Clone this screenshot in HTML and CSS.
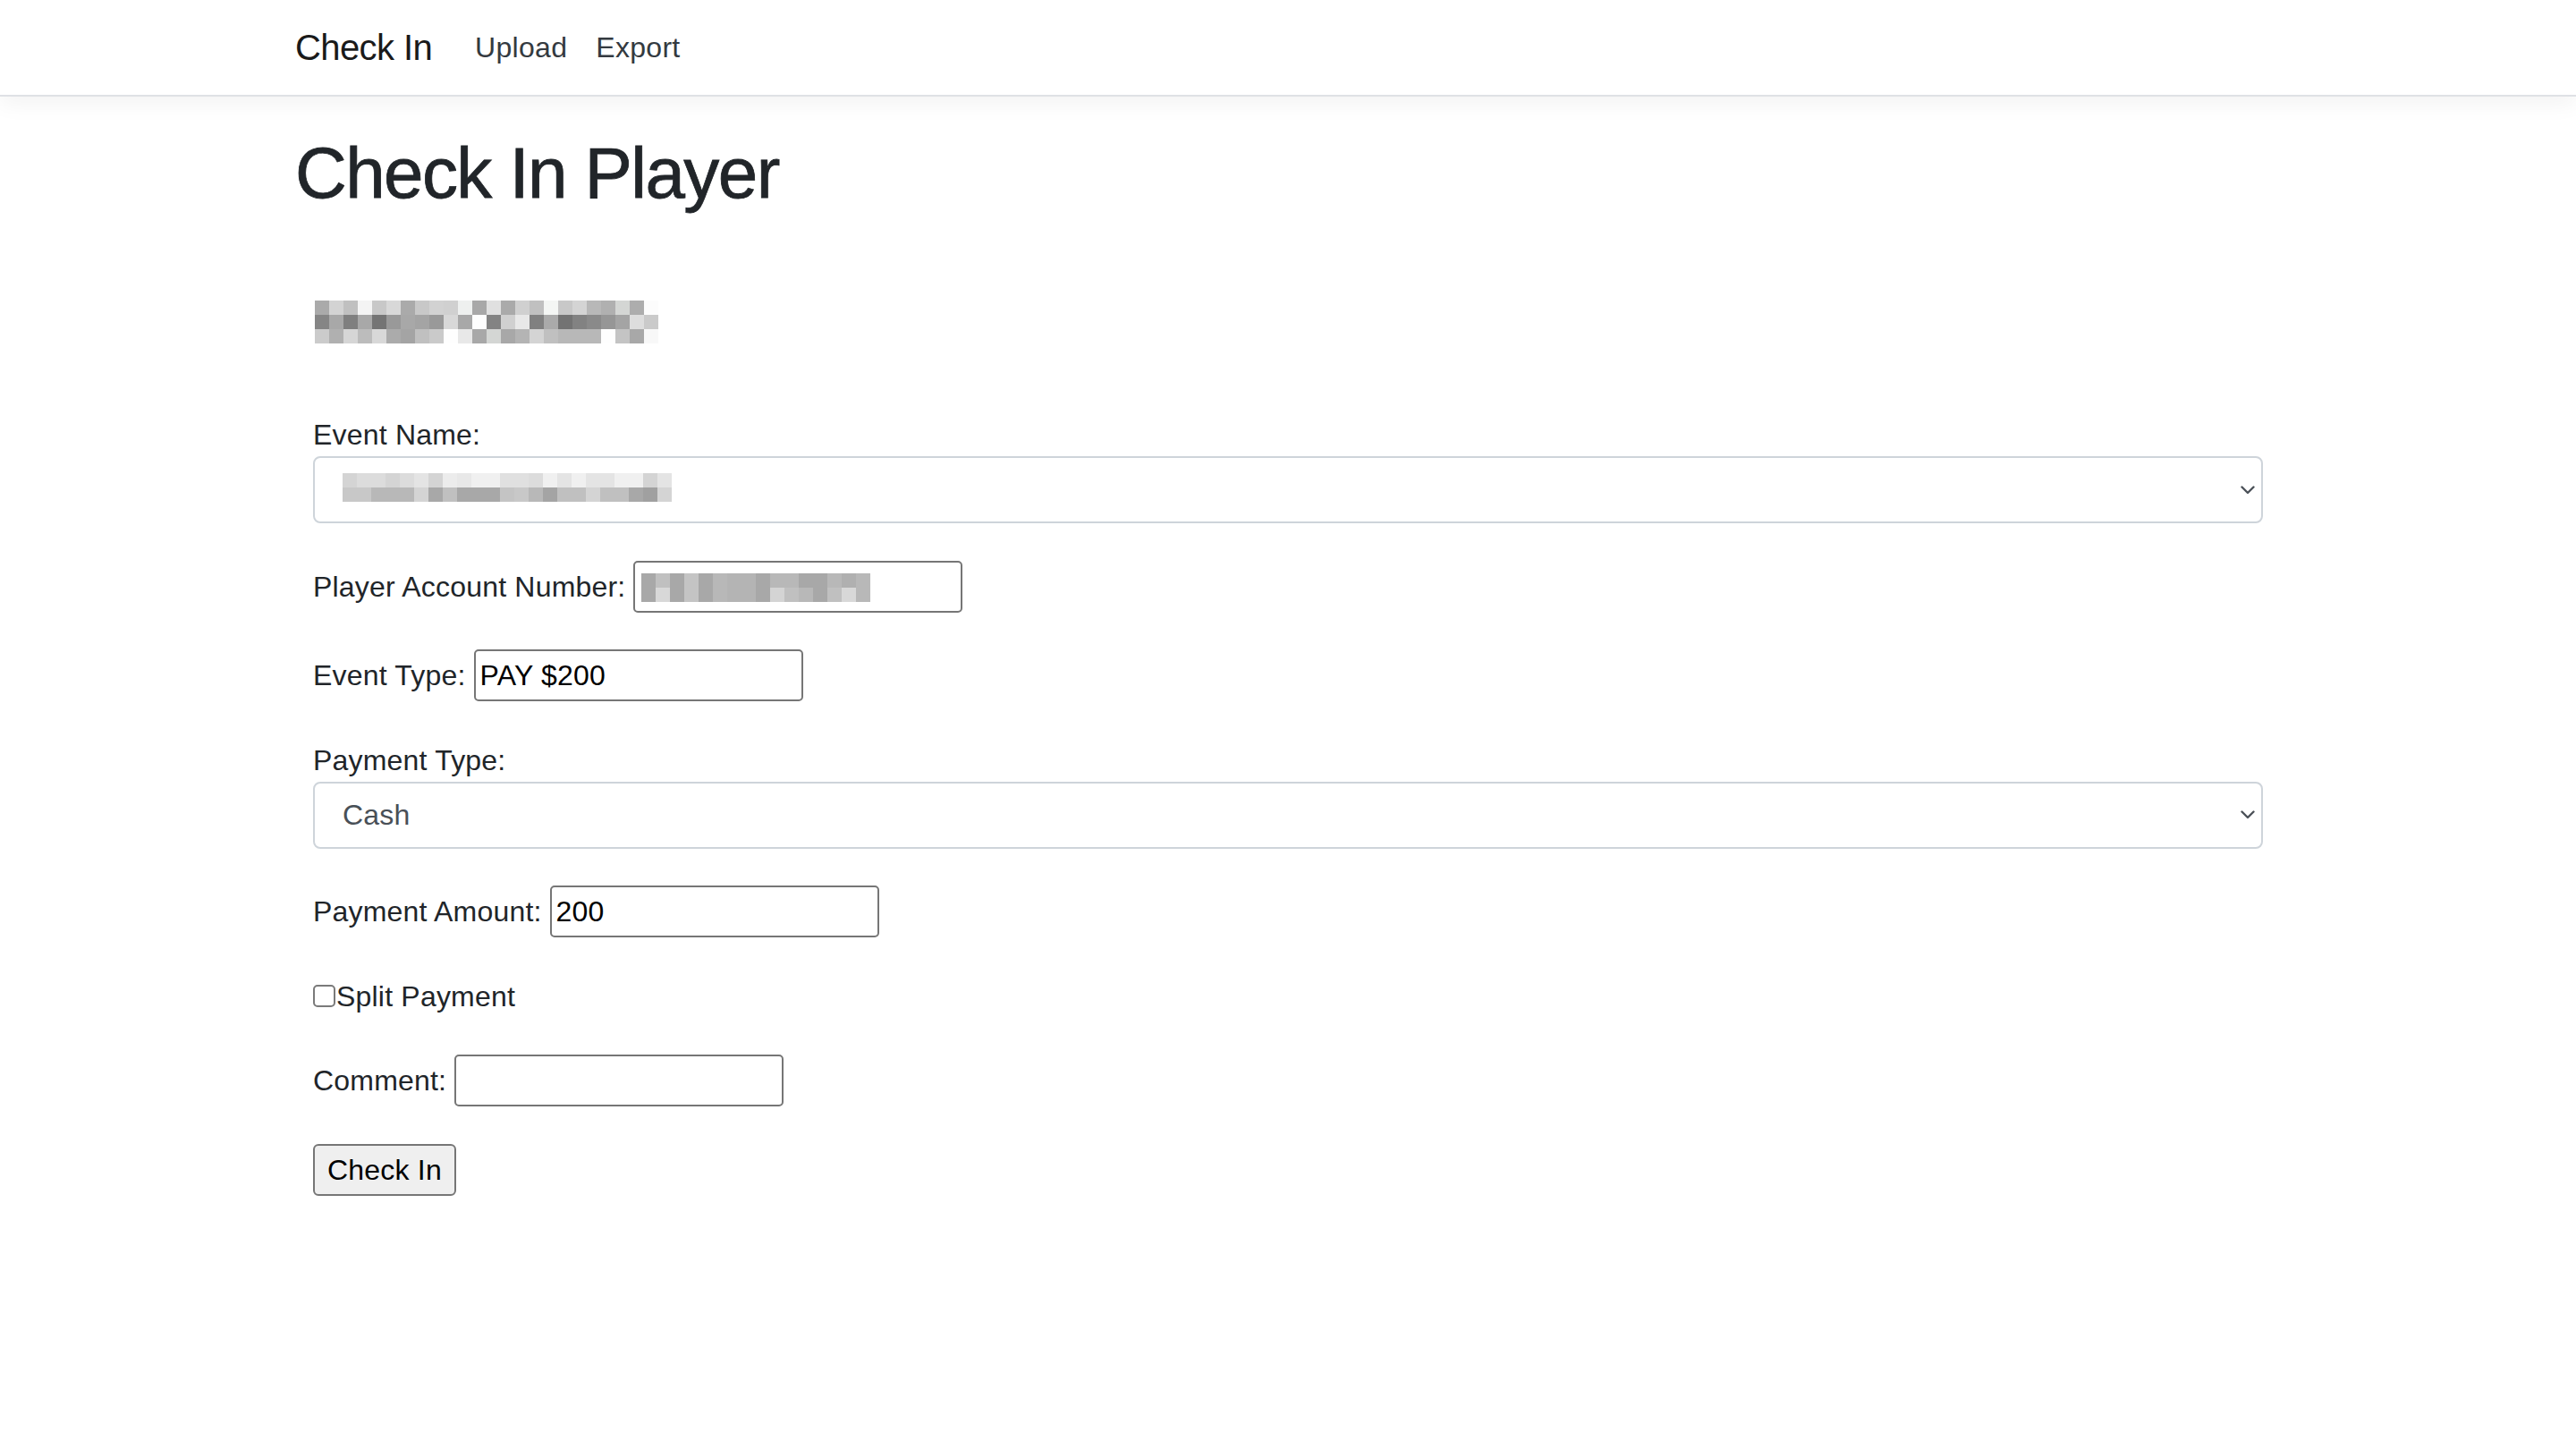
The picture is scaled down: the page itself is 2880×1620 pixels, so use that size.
FILE: index.html
```html
<!DOCTYPE html>
<html lang="en">
<head>
<meta charset="utf-8">
<title>Check In Player</title>
<link rel="stylesheet" href="styles.css">
</head>
<body>
<header class="navbar">
  <div class="container nav-inner">
    <a class="brand" href="#">Check In</a>
    <nav class="nav-links">
      <a href="#">Upload</a>
      <a href="#">Export</a>
    </nav>
  </div>
</header>

<main class="container">
  <h1 class="page-title">Check In Player</h1>
  <div class="panel">
    <div class="mosaic name-mosaic" aria-hidden="true">
      <div class="mrow">
        <i style="background:#aaaaaa"></i><i style="background:#d3d3d3"></i><i style="background:#c0c0c0"></i><i style="background:#f4f4f4"></i><i style="background:#c8c8c8"></i><i style="background:#d8d8d8"></i><i style="background:#aaaaaa"></i><i style="background:#c8c8c8"></i><i style="background:#d2d2d2"></i><i style="background:#d0d0d0"></i><i style="background:#eef0ef"></i><i style="background:#a8a8a8"></i><i style="background:#e0e0e0"></i><i style="background:#aaaaaa"></i><i style="background:#d0d0d0"></i><i style="background:#c0c0c0"></i><i style="background:#f4f6f4"></i><i style="background:#c8c8c8"></i><i style="background:#d4d4d4"></i><i style="background:#b8b8b8"></i><i style="background:#b0b0b0"></i><i style="background:#d4d6d4"></i><i style="background:#adadad"></i><i style="background:#fcfcfc"></i>
      </div>
      <div class="mrow">
        <i style="background:#858585"></i><i style="background:#a8a8a8"></i><i style="background:#7f7f7f"></i><i style="background:#a8a8a8"></i><i style="background:#747474"></i><i style="background:#999999"></i><i style="background:#a8a8a8"></i><i style="background:#a4a4a4"></i><i style="background:#999999"></i><i style="background:#d8d8d8"></i><i style="background:#a8a8a8"></i><i style="background:#fefefe"></i><i style="background:#838383"></i><i style="background:#d0d0d0"></i><i style="background:#e8e8e8"></i><i style="background:#808080"></i><i style="background:#aaaaaa"></i><i style="background:#737373"></i><i style="background:#828282"></i><i style="background:#8a8a8a"></i><i style="background:#969696"></i><i style="background:#a4a4a4"></i><i style="background:#dddddd"></i><i style="background:#cacaca"></i>
      </div>
      <div class="mrow">
        <i style="background:#cbcbcb"></i><i style="background:#b0b0b0"></i><i style="background:#d6d6d6"></i><i style="background:#bcbcbc"></i><i style="background:#d8d8d8"></i><i style="background:#ababab"></i><i style="background:#a4a4a4"></i><i style="background:#c0c0c0"></i><i style="background:#cacaca"></i><i style="background:#fefefe"></i><i style="background:#e8e8e8"></i><i style="background:#a8a8a8"></i><i style="background:#d4d6d4"></i><i style="background:#a8a8a8"></i><i style="background:#b4b4b4"></i><i style="background:#d4d4d4"></i><i style="background:#c0c0c0"></i><i style="background:#b8b8b8"></i><i style="background:#b8b8b8"></i><i style="background:#b8b8b8"></i><i style="background:#fefefe"></i><i style="background:#c4c4c4"></i><i style="background:#a8a8a8"></i><i style="background:#f8f8f8"></i>
      </div>
    </div>

    <form class="checkin-form">
      <div class="field-block">
        <label class="label">Event Name:</label>
        <div class="select-box">
          <div class="mosaic" aria-hidden="true">
            <div class="mrow">
              <i style="background:#d4d4d4"></i><i style="background:#dcdcdc"></i><i style="background:#dcdcdc"></i><i style="background:#d4d4d4"></i><i style="background:#dcdcdc"></i><i style="background:#e4e4e4"></i><i style="background:#d4d4d4"></i><i style="background:#ececec"></i><i style="background:#e8e8e8"></i><i style="background:#f0f0f0"></i><i style="background:#f0f0f0"></i><i style="background:#e0e0e0"></i><i style="background:#e0e0e0"></i><i style="background:#dcdcdc"></i><i style="background:#f0f0f0"></i><i style="background:#e4e4e4"></i><i style="background:#f0f0f0"></i><i style="background:#e4e4e4"></i><i style="background:#e4e4e4"></i><i style="background:#f0f0f0"></i><i style="background:#f0f0f0"></i><i style="background:#d4d4d4"></i><i style="background:#e4e4e4"></i>
            </div>
            <div class="mrow">
              <i style="background:#c8c8c8"></i><i style="background:#c8c8c8"></i><i style="background:#b8b8b8"></i><i style="background:#b8b8b8"></i><i style="background:#b8b8b8"></i><i style="background:#d4d4d4"></i><i style="background:#a8a8a8"></i><i style="background:#c0c0c0"></i><i style="background:#a8a8a8"></i><i style="background:#a8a8a8"></i><i style="background:#a8a8a8"></i><i style="background:#c4c4c4"></i><i style="background:#c8c8c8"></i><i style="background:#b8b8b8"></i><i style="background:#a4a4a4"></i><i style="background:#c0c0c0"></i><i style="background:#c0c0c0"></i><i style="background:#d4d4d4"></i><i style="background:#c0c0c0"></i><i style="background:#c0c0c0"></i><i style="background:#a8a8a8"></i><i style="background:#a0a0a0"></i><i style="background:#d4d4d4"></i>
            </div>
          </div>
          <svg class="chevron" viewBox="0 0 16 10" aria-hidden="true"><path d="M1.5 1.5 L8 8 L14.5 1.5" fill="none" stroke="#4b5158" stroke-width="2.4" stroke-linecap="round" stroke-linejoin="round"/></svg>
        </div>
      </div>

      <div class="field-inline">
        <label class="label">Player Account Number:</label>
        <div class="input input-mosaic">
          <div class="mosaic" aria-hidden="true">
            <div class="mrow">
              <i style="background:#a8a8a8"></i><i style="background:#c0c0c0"></i><i style="background:#a8a8a8"></i><i style="background:#c4c4c4"></i><i style="background:#a8a8a8"></i><i style="background:#b8b8b8"></i><i style="background:#b4b4b4"></i><i style="background:#b4b4b4"></i><i style="background:#a8a8a8"></i><i style="background:#b8b8b8"></i><i style="background:#b8b8b8"></i><i style="background:#a8a8a8"></i><i style="background:#a8a8a8"></i><i style="background:#b8b8b8"></i><i style="background:#b0b0b0"></i><i style="background:#b8b8b8"></i>
            </div>
            <div class="mrow">
              <i style="background:#a8a8a8"></i><i style="background:#d8d8d8"></i><i style="background:#a8a8a8"></i><i style="background:#c4c4c4"></i><i style="background:#a8a8a8"></i><i style="background:#b8b8b8"></i><i style="background:#b4b4b4"></i><i style="background:#b4b4b4"></i><i style="background:#a8a8a8"></i><i style="background:#d4d4d4"></i><i style="background:#c0c0c0"></i><i style="background:#b8b8b8"></i><i style="background:#a8a8a8"></i><i style="background:#c0c0c0"></i><i style="background:#d8d8d8"></i><i style="background:#b8b8b8"></i>
            </div>
          </div>
        </div>
      </div>

      <div class="field-inline">
        <label class="label" for="eventType">Event Type:</label>
        <input class="input" id="eventType" type="text" value="PAY $200">
      </div>

      <div class="field-block">
        <label class="label" for="paymentType">Payment Type:</label>
        <select class="select" id="paymentType">
          <option>Cash</option>
          <option>Card</option>
        </select>
      </div>

      <div class="field-inline">
        <label class="label" for="paymentAmount">Payment Amount:</label>
        <input class="input" id="paymentAmount" type="text" value="200">
      </div>

      <div class="field-check">
        <input class="checkbox" id="split" type="checkbox">
        <label class="label" for="split">Split Payment</label>
      </div>

      <div class="field-inline">
        <label class="label" for="comment">Comment:</label>
        <input class="input" id="comment" type="text" value="">
      </div>

      <div class="field-inline">
        <button class="btn" type="button">Check In</button>
      </div>
    </form>
  </div>
</main>
</body>
</html>
```

FILE: styles.css
```css
* {
  box-sizing: border-box;
}

html, body {
  margin: 0;
  padding: 0;
  background: #ffffff;
}

body {
  font-family: "Liberation Sans", Arial, sans-serif;
  font-size: 32px;
  line-height: 48px;
  color: #212529;
}

.container {
  max-width: 2280px;
  margin: 0 auto;
  padding: 0 30px;
}

/* Navbar */
.navbar {
  height: 108px;
  background: #ffffff;
  border-bottom: 2px solid #dfe1e5;
  box-shadow: 0 8px 24px rgba(0, 0, 0, 0.05);
}

.nav-inner {
  height: 106px;
  display: flex;
  align-items: center;
}

.brand {
  font-size: 40px;
  line-height: 60px;
  color: #1a1a1a;
  text-decoration: none;
  letter-spacing: -0.6px;
  margin-right: 32px;
}

.nav-links {
  display: flex;
}

.nav-links a {
  font-size: 32px;
  line-height: 48px;
  color: #343a40;
  text-decoration: none;
  letter-spacing: 0.3px;
  padding: 0 16px;
}

/* Heading */
.page-title {
  margin: 0;
  padding-top: 38px;
  font-size: 80px;
  line-height: 96px;
  font-weight: 400;
  letter-spacing: -1.6px;
  color: #212529;
  -webkit-text-stroke: 0.8px #212529;
}

.panel {
  padding: 94px 20px 0;
}

/* Mosaic (blurred values) */
.mosaic {
  display: flex;
  flex-direction: column;
}

.mrow {
  display: flex;
}

.mrow i {
  display: block;
  width: 16px;
  height: 16px;
}

.name-mosaic {
  margin-left: 2px;
  margin-bottom: 78px;
}

/* Form */
.checkin-form {
  display: flex;
  flex-direction: column;
  gap: 41.5px;
}

.label {
  font-size: 32px;
  line-height: 48px;
  letter-spacing: 0.2px;
  color: #212529;
}

.field-block {
  display: flex;
  flex-direction: column;
}

.field-inline {
  display: flex;
  align-items: center;
  gap: 9px;
  height: 58px;
}

.field-check {
  display: flex;
  align-items: center;
  height: 48px;
}

.select-box,
.select {
  height: 75px;
  width: 100%;
  border: 2px solid #ced4da;
  border-radius: 8px;
  background-color: #ffffff;
  display: flex;
  align-items: center;
  padding: 0 40px 0 31px;
  position: relative;
}

.select-box .mosaic {
  margin-top: -6px;
}

.select {
  appearance: none;
  -webkit-appearance: none;
  font-family: "Liberation Sans", Arial, sans-serif;
  font-size: 32px;
  letter-spacing: 0.2px;
  color: #495057;
  background-image: url("data:image/svg+xml,%3Csvg xmlns='http://www.w3.org/2000/svg' viewBox='0 0 16 10'%3E%3Cpath d='M1.5 1.5 L8 8 L14.5 1.5' fill='none' stroke='%234b5158' stroke-width='2.4' stroke-linecap='round' stroke-linejoin='round'/%3E%3C/svg%3E");
  background-repeat: no-repeat;
  background-size: 16px 10px;
  background-position: right 7px center;
  outline: none;
}

.chevron {
  position: absolute;
  right: 7px;
  top: 50%;
  width: 16px;
  height: 10px;
  margin-top: -5px;
}

.input {
  width: 368px;
  height: 58px;
  border: 2px solid #767676;
  border-radius: 5px;
  padding: 0 5px;
  font-family: "Liberation Sans", Arial, sans-serif;
  font-size: 32px;
  letter-spacing: 0.2px;
  color: #000000;
  background: #ffffff;
  outline: none;
}

.input-mosaic {
  display: flex;
  align-items: center;
  padding: 0 7px;
}

.input-mosaic .mosaic {
  margin-top: 2px;
}

.checkbox {
  appearance: none;
  -webkit-appearance: none;
  width: 25px;
  height: 25px;
  margin: 0 1px 0 0;
  border: 2px solid #7a7a7a;
  border-radius: 5px;
  background: #ffffff;
  flex: none;
}

.btn {
  height: 58px;
  padding: 0 14px;
  border: 2px solid #767676;
  border-radius: 6px;
  background: #efefef;
  font-family: "Liberation Sans", Arial, sans-serif;
  font-size: 32px;
  letter-spacing: 0.2px;
  color: #000000;
  line-height: 48px;
}
```
